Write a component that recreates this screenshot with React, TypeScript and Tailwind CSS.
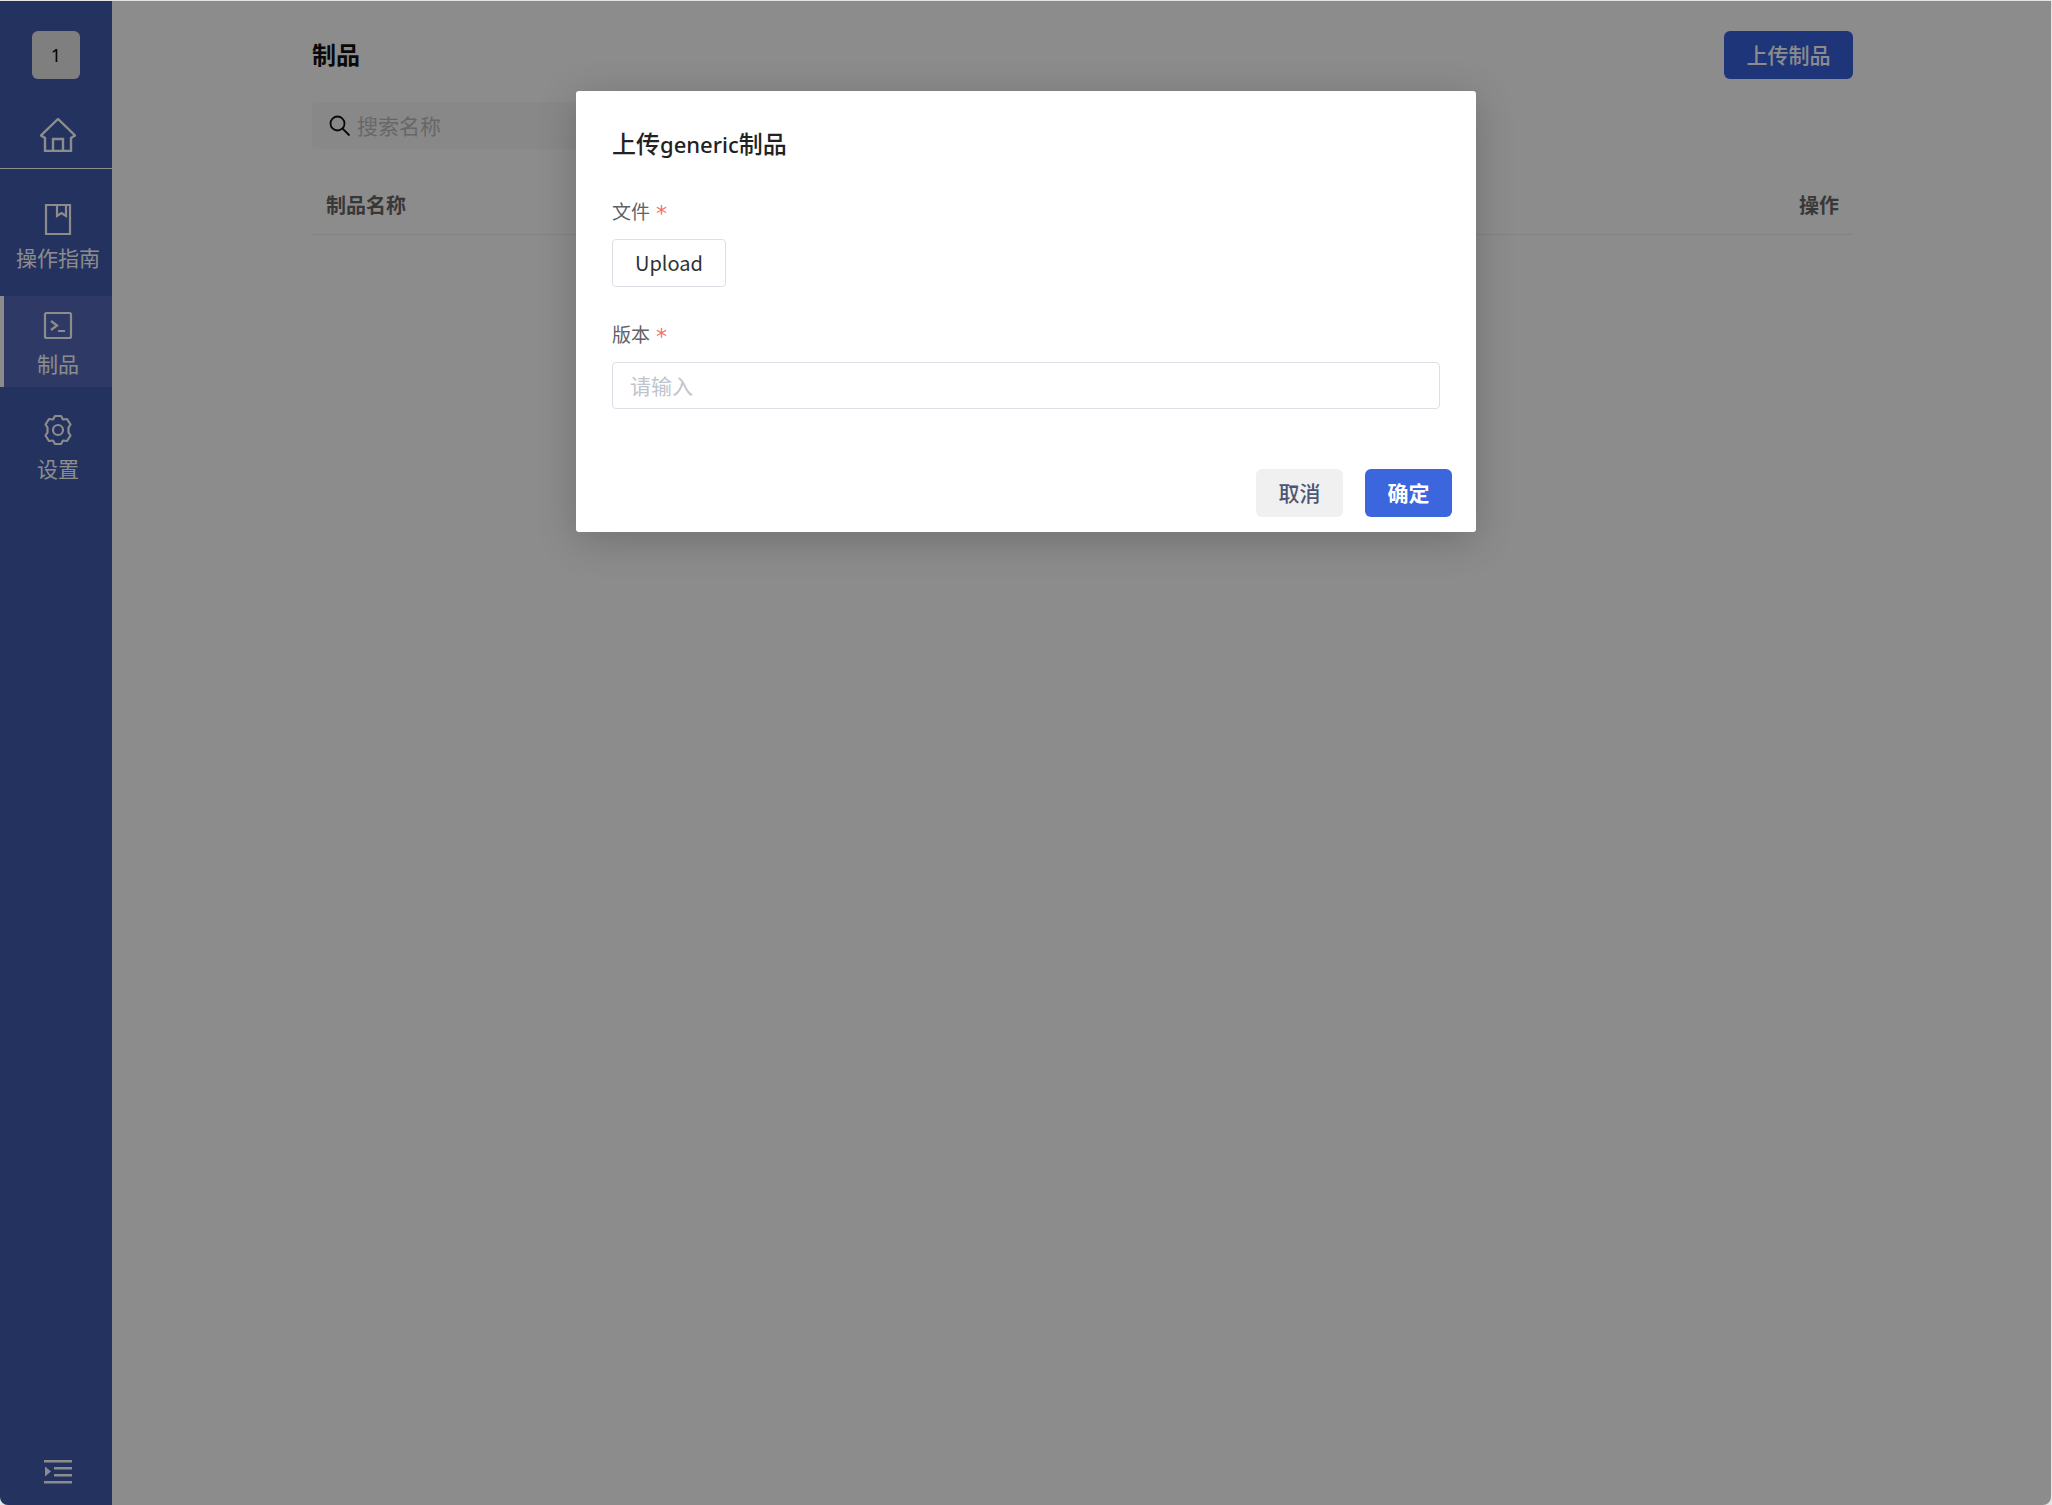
const font = { fontFamily: '"Noto Sans CJK SC", sans-serif' };

function NavItem({ label, active, children }: { label: string; active?: boolean; children: React.ReactNode }) {
  return (
    <div
      className={`flex h-[91px] flex-col items-center border-l-4 pt-[13px] text-white ${
        active ? "border-white bg-white/10" : "border-transparent"
      }`}
    >
      <div className="h-[32px] w-[32px]">{children}</div>
      <div className="mt-[8px] text-[21px] leading-[28px] whitespace-nowrap">{label}</div>
    </div>
  );
}

function FieldLabel({ text }: { text: string }) {
  return (
    <div className="flex h-[24px] items-center text-[19px] leading-[24px] text-[#606266]">
      {text}
      <span className="ml-[6px] mt-[6px] font-['DejaVu_Sans'] text-[22px] text-[#f56c6c]">*</span>
    </div>
  );
}

export default function App() {
  return (
    <div className="h-[1505px] w-[2052px] overflow-hidden bg-[#e4e4e4] pt-[1px] pr-[1px]" style={font}>
      <div className="relative flex h-[1504px] overflow-hidden rounded-b-[8px] bg-white">
        {/* Sidebar */}
        <aside className="flex w-[112px] shrink-0 flex-col bg-[#425bb0]">
          <div className="flex justify-center pt-[30px]">
            <div className="flex h-[48px] w-[48px] items-center justify-center rounded-[6px] bg-[#e8e8e8] font-['Noto_Sans'] text-[18px] text-black">
              1
            </div>
          </div>
          <div className="flex h-[90px] justify-center border-b border-white pt-[39px] pl-[4px] text-white">
            <svg width="36" height="34" viewBox="0 0 36 34" fill="none" stroke="currentColor" strokeWidth="2.4">
              <path d="M5 33H31V20L35 17.5 18 1 1 17.5 5 20Z" />
              <path d="M13 33V21H23V33" />
            </svg>
          </div>
          <div className="mt-[21px] flex flex-col gap-[14px]">
            <div className="mb-[1px]">
              <NavItem label="操作指南">
                <svg width="32" height="32" viewBox="0 0 32 32" fill="none" stroke="currentColor" strokeWidth="2.2">
                  <path d="M4 2H28V31H4Z" />
                  <path d="M15 2V13L19.5 10 24 13V2" />
                </svg>
              </NavItem>
            </div>
            <NavItem label="制品" active>
              <svg width="32" height="32" viewBox="0 0 32 32" fill="none" stroke="currentColor" strokeWidth="2.2">
                <rect x="3" y="4" width="26" height="25" rx="1.5" />
                <path d="M9 12 15 16.5 9 21M16 22H23" />
              </svg>
            </NavItem>
            <NavItem label="设置">
              <svg width="32" height="32" viewBox="0 0 32 32" fill="none" stroke="currentColor" strokeWidth="2.2" strokeLinejoin="round">
                <path d="M13 2H19L21 5.5 25 5 28.5 10.5 26.5 13.5V18.5L28.5 21.5 25 27 21 26.5 19 30H13L11 26.5 7 27 3.5 21.5 5.5 18.5V13.5L3.5 10.5 7 5 11 5.5Z" />
                <circle cx="16" cy="16" r="5" />
              </svg>
            </NavItem>
          </div>
          <div className="mt-auto flex justify-center pb-[21px] pl-[4px] text-white">
            <svg width="28" height="24" viewBox="0 0 28 24" fill="currentColor">
              <path d="M0 0H28V2.5H0ZM10 7H28V9.5H10ZM10 14H28V16.5H10ZM0 21H28V23.5H0ZM1 6.5 7 11.5 1 16.5Z" />
            </svg>
          </div>
        </aside>

        {/* Main */}
        <main className="min-w-0 flex-1">
          <div className="ml-[200px] w-[1541px] pt-[30px]">
            <div className="flex h-[48px] items-center justify-between">
              <h1 className="-mt-[2px] text-[24px] font-bold text-[#111]">制品</h1>
              <button className="flex h-[48px] w-[129px] items-center justify-center rounded-[6px] bg-[#3861dd] text-[21px] font-medium text-white">
                上传制品
              </button>
            </div>
            <div className="mt-[23px] flex h-[47px] w-[400px] items-center rounded-[4px] bg-[#f7f7f7] pl-[17px]">
              <svg width="22" height="22" viewBox="0 0 22 22" fill="none" stroke="#111" strokeWidth="1.8">
                <circle cx="8.5" cy="8.5" r="7" />
                <path d="M13.5 13.5 20.5 20.5" />
              </svg>
              <span className="ml-[6px] text-[21px] text-[#bcbcbc]">搜索名称</span>
            </div>
            <div className="mt-[32px] flex h-[54px] items-center justify-between border-b border-[#eeeeee] px-[14px] pb-[6px] text-[20px] font-bold text-[#666]">
              <span>制品名称</span>
              <span>操作</span>
            </div>
          </div>
        </main>

        {/* Dialog overlay */}
        <div className="absolute inset-0 flex justify-center bg-black/45 pt-[90px] pl-[1px]">
          <div className="h-[441px] w-[900px] rounded-[3px] bg-white px-[36px] pt-[34px] shadow-[0_8px_40px_rgba(0,0,0,0.2)]">
            <h2 className="text-[24px] leading-[36px] font-medium text-[#222]">
              上传<span className="font-['Noto_Sans'] text-[22px]">generic</span>制品
            </h2>
            <div className="mt-[37px]">
              <FieldLabel text="文件" />
            </div>
            <button className="mt-[16px] block h-[48px] w-[114px] rounded-[4px] border border-[#dcdfe6] text-[20px] text-[#303133]">
              Upload
            </button>
            <div className="mt-[35px]">
              <FieldLabel text="版本" />
            </div>
            <div className="mt-[16px] flex h-[47px] items-center rounded-[4px] border border-[#dcdfe6] pl-[17px] text-[21px] text-[#c0c4cc]">
              请输入
            </div>
            <div className="-mr-[12px] mt-[60px] flex justify-end gap-[22px]">
              <button className="h-[48px] w-[87px] rounded-[6px] bg-[#f0f0f0] text-[21px] font-medium text-[#4d5775]">
                取消
              </button>
              <button className="h-[48px] w-[87px] rounded-[6px] bg-[#3c66de] text-[21px] font-bold text-white">
                确定
              </button>
            </div>
          </div>
        </div>
      </div>
    </div>
  );
}
